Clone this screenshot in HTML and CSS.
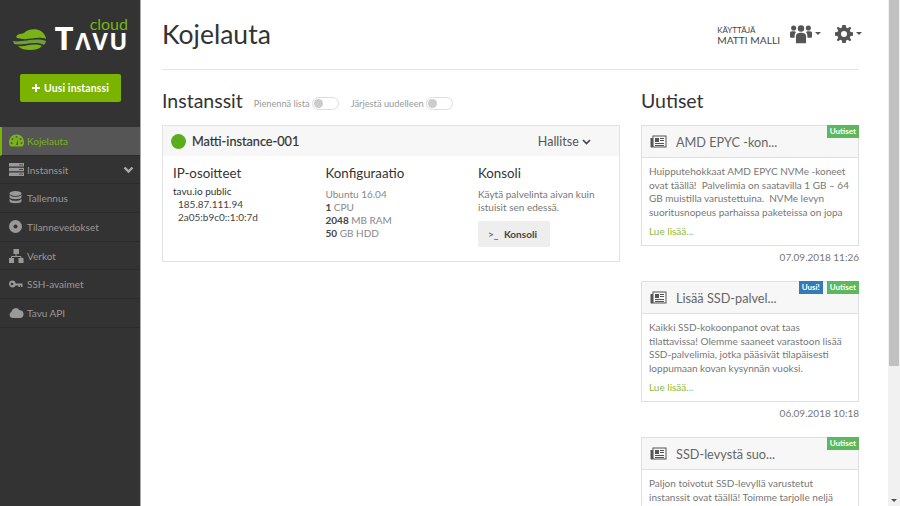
FILE: index.html
```html
<!DOCTYPE html>
<html lang="fi">
<head>
<meta charset="utf-8">
<title>Kojelauta</title>
<link rel="stylesheet" href="styles.css">
</head>
<body>
<aside class="sidebar">
  <div class="logo">
    <svg class="logo-mark" width="34" height="22" viewBox="0 0 34 22">
      <path d="M3 9C5 5 9 6 11 5C14 1 23 0 28 3C31 5 33 9 33 11C26 8 16 12 9 11C6 10.500 4 10 3 9Z" fill="#7ab317"/>
      <path d="M0 13C8 15 22 9 33 13C33 14 32 16 31 17C22 12 11 18 1 16Z" fill="#6f9f3a"/>
      <path d="M5 18C13 19 21 14 29 18C26 21 22 22 17 22C12 22 8 21 5 18Z" fill="#7ab317"/>
    </svg>
    <div class="logo-text">
      <span class="logo-cloud">cloud</span>
      <span class="logo-name"><span class="logo-t">T</span>ΛVU</span>
    </div>
  </div>
  <a class="new-btn"><svg class="plus" width="8" height="8" viewBox="0 0 8 8"><path d="M3 0H5V3H8V5H5V8H3V5H0V3H3Z" fill="#fff"/></svg>Uusi instanssi</a>
  <nav class="menu">
    <a class="menu-item active">
      <svg class="mi" width="15" height="13" viewBox="0 0 15 13"><path d="M7.500 0.500A7.500 7.500 0 0 0 1.500 12.500H13.500A7.500 7.500 0 0 0 7.500 0.500Z" fill="currentColor"/><circle cx="7.500" cy="3" r="1" fill="#555"/><circle cx="3.500" cy="5" r="1" fill="#555"/><circle cx="11.500" cy="5" r="1" fill="#555"/><circle cx="2.500" cy="9" r="1" fill="#555"/><circle cx="12.500" cy="9" r="1" fill="#555"/><path d="M7 11L9 5L9 11Z" fill="#555"/></svg>
      Kojelauta
    </a>
    <a class="menu-item">
      <svg class="mi" width="15" height="13" viewBox="0 0 15 13"><path d="M0 0H15V3.500H0ZM0 4.700H15V8.200H0ZM0 9.400H15V13H0Z" fill="currentColor"/><path d="M10 1.500H14V2.200H10ZM10 6H14V6.800H10ZM10 10.800H14V11.600H10Z" fill="#333"/></svg>
      Instanssit
      <svg class="menu-chev" width="11" height="8" viewBox="0 0 11 8"><path d="M1.500 1.500L5.500 5.500L9.500 1.500" fill="none" stroke="#aaa" stroke-width="2.400"/></svg>
    </a>
    <a class="menu-item">
      <svg class="mi" width="15" height="14" viewBox="0 0 15 14"><ellipse cx="6.500" cy="2.500" rx="6" ry="2.500" fill="currentColor"/><path d="M0.500 4V6C0.500 7.300 3 8.300 6.500 8.300S12.500 7.300 12.500 6V4C11 5.400 9 5.800 6.500 5.800S2 5.400 0.500 4ZM0.500 8V10C0.500 11.300 3 12.300 6.500 12.300S12.500 11.300 12.500 10V8C11 9.400 9 9.800 6.500 9.800S2 9.400 0.500 8Z" fill="currentColor"/></svg>
      Tallennus
    </a>
    <a class="menu-item">
      <svg class="mi" width="15" height="13" viewBox="0 0 15 13"><circle cx="6.500" cy="6.500" r="6.500" fill="currentColor"/><circle cx="6.500" cy="6.500" r="2" fill="#333"/></svg>
      Tilannevedokset
    </a>
    <a class="menu-item">
      <svg class="mi" width="15" height="14" viewBox="0 0 15 14"><path d="M4.500 0H10V5H4.500ZM0 9H5V14H0ZM9.500 9H14.500V14H9.500Z" fill="currentColor"/><path d="M7 5V7.500M2.500 9V7.500H12V9" fill="none" stroke="currentColor"/></svg>
      Verkot
    </a>
    <a class="menu-item">
      <svg class="mi" width="15" height="9" viewBox="0 0 15 9"><path d="M3.500 0.500A3.500 3.500 0 1 0 6.700 5.500H9.500V7H11V5.500H12V7H13.500V3.500H6.700A3.500 3.500 0 0 0 3.500 0.500ZM3 2.700A1.300 1.300 0 1 1 3 5.300A1.300 1.300 0 0 1 3 2.700Z" fill="currentColor"/></svg>
      SSH-avaimet
    </a>
    <a class="menu-item">
      <svg class="mi" width="15" height="11" viewBox="0 0 15 11"><path d="M3.500 11A3.300 3.300 0 0 1 2.500 4.700A4.300 4.300 0 0 1 10.500 3.300A3.900 3.900 0 0 1 11.500 11Z" fill="currentColor"/></svg>
      Tavu API
    </a>
  </nav>
</aside>

<main class="main">
  <header class="top">
    <h1 class="page-title">Kojelauta</h1>
    <div class="user">
      <div class="user-text">
        <span class="user-role">KÄYTTÄJÄ</span>
        <span class="user-name">MATTI MALLI</span>
      </div>
      <span class="drop">
        <svg width="22" height="20" viewBox="0 0 24 20"><circle cx="12" cy="4" r="3.500" fill="#555"/><circle cx="4" cy="3.500" r="2.800" fill="#555"/><circle cx="20" cy="3.500" r="2.800" fill="#555"/><path d="M6.500 12.500C6.500 9.500 9 8.500 12 8.500S17.500 9.500 17.500 12.500V20H6.500Z" fill="#555"/><path d="M0 8.500C0 7 2 7 4 7C5 7 6 7.500 6.500 8C5.500 9 5 10.500 5 12.500V14H1C0 14 0 13 0 12ZM24 8.500C24 7 22 7 20 7C19 7 18 7.500 17.500 8C18.500 9 19 10.500 19 12.500V14H23C24 14 24 13 24 12Z" fill="#555"/></svg>
        <i class="caret"></i>
      </span>
      <span class="drop">
        <svg width="18" height="18" viewBox="0 0 18 18"><path d="M7.300 0H10.700L11.100 2.500L12.800 3.200L14.900 1.700L16.300 3.100L14.800 5.200L15.500 6.900L18 7.300V10.700L15.500 11.100L14.800 12.800L16.300 14.900L14.900 16.300L12.800 14.800L11.100 15.500L10.700 18H7.300L6.900 15.500L5.200 14.800L3.100 16.300L1.700 14.900L3.200 12.800L2.500 11.100L0 10.700V7.300L2.500 6.900L3.200 5.200L1.700 3.100L3.100 1.700L5.200 3.200L6.900 2.500ZM9 6A3 3 0 1 0 9 12A3 3 0 1 0 9 6Z" fill="#555" fill-rule="evenodd"/></svg>
        <i class="caret"></i>
      </span>
    </div>
  </header>
  <div class="columns">
    <section class="left">
      <div class="section-head">
        <h2 class="section-title">Instanssit</h2>
        <span class="toggle-label">Pienennä lista</span><i class="toggle"></i>
        <span class="toggle-label second">Järjestä uudelleen</span><i class="toggle"></i>
      </div>
      <article class="instance">
        <div class="instance-head">
          <i class="status"></i>
          <span class="instance-name">Matti-instance-001</span>
          <span class="manage">Hallitse
            <svg width="9" height="6" viewBox="0 0 9 6"><path d="M1 1L4.500 4.500L8 1" fill="none" stroke="#444" stroke-width="1.600"/></svg>
          </span>
        </div>
        <div class="instance-body">
          <div class="col">
            <h3 class="col-title">IP-osoitteet</h3>
            <div class="ip-net">tavu.io public</div>
            <div class="ip">185.87.111.94</div>
            <div class="ip">2a05:b9c0::1:0:7d</div>
          </div>
          <div class="col">
            <h3 class="col-title">Konfiguraatio</h3>
            <div class="spec-list">
              <div class="spec">Ubuntu 16.04</div>
              <div class="spec"><b>1</b> CPU</div>
              <div class="spec"><b>2048</b> MB RAM</div>
              <div class="spec"><b>50</b> GB HDD</div>
            </div>
          </div>
          <div class="col">
            <h3 class="col-title">Konsoli</h3>
            <p class="console-text">Käytä palvelinta aivan kuin istuisit sen edessä.</p>
            <a class="console-btn"><span class="prompt">&gt;_</span> Konsoli</a>
          </div>
        </div>
      </article>
    </section>
    <section class="news">
      <h2 class="news-title">Uutiset</h2>
      <article class="news-card">
        <div class="news-head">
          <svg class="news-icon" width="17" height="13" viewBox="0 0 17 13"><path d="M2.500 0.500H16.500V12.500H1.500C0.800 12.500 0.500 12 0.500 11.500V3H2.500ZM3.500 1.500V11.500H15.500V1.500ZM5 3H9V7H5ZM10 3H14V4H10ZM10 5H14V6H10ZM5 8H14V9H5ZM5 10H14V11H5Z" fill="#555" fill-rule="evenodd"/></svg>
          <span class="news-name">AMD EPYC -kon...</span>
          <div class="badges"><span class="badge green">Uutiset</span></div>
        </div>
        <div class="news-body">
          <p class="news-text">Huipputehokkaat AMD EPYC NVMe -koneet ovat täällä!&nbsp; Palvelimia on saatavilla 1 GB – 64 GB muistilla varustettuina.&nbsp; NVMe levyn suoritusnopeus parhaissa paketeissa on jopa</p>
          <a class="more">Lue lisää...</a>
        </div>
      </article>
      <div class="news-date">07.09.2018 11:26</div>
      <article class="news-card">
        <div class="news-head">
          <svg class="news-icon" width="17" height="13" viewBox="0 0 17 13"><path d="M2.500 0.500H16.500V12.500H1.500C0.800 12.500 0.500 12 0.500 11.500V3H2.500ZM3.500 1.500V11.500H15.500V1.500ZM5 3H9V7H5ZM10 3H14V4H10ZM10 5H14V6H10ZM5 8H14V9H5ZM5 10H14V11H5Z" fill="#555" fill-rule="evenodd"/></svg>
          <span class="news-name">Lisää SSD-palvel...</span>
          <div class="badges"><span class="badge blue">Uusi!</span><span class="badge green">Uutiset</span></div>
        </div>
        <div class="news-body">
          <p class="news-text">Kaikki SSD-kokoonpanot ovat taas tilattavissa! Olemme saaneet varastoon lisää SSD-palvelimia, jotka pääsivät tilapäisesti loppumaan kovan kysynnän vuoksi.</p>
          <a class="more">Lue lisää...</a>
        </div>
      </article>
      <div class="news-date">06.09.2018 10:18</div>
      <article class="news-card">
        <div class="news-head">
          <svg class="news-icon" width="17" height="13" viewBox="0 0 17 13"><path d="M2.500 0.500H16.500V12.500H1.500C0.800 12.500 0.500 12 0.500 11.500V3H2.500ZM3.500 1.500V11.500H15.500V1.500ZM5 3H9V7H5ZM10 3H14V4H10ZM10 5H14V6H10ZM5 8H14V9H5ZM5 10H14V11H5Z" fill="#555" fill-rule="evenodd"/></svg>
          <span class="news-name">SSD-levystä suo...</span>
          <div class="badges"><span class="badge green">Uutiset</span></div>
        </div>
        <div class="news-body">
          <p class="news-text">Paljon toivotut SSD-levyllä varustetut instanssit ovat täällä! Toimme tarjolle neljä</p>
        </div>
      </article>
    </section>
  </div>
</main>

<div class="scrollbar">
  <div class="thumb"></div>
  <i class="scroll-down"></i>
</div>
</body>
</html>
```

FILE: styles.css
```css
* { box-sizing: border-box; }
html, body { height: 100%; }
body {
  margin: 0;
  display: flex;
  height: 506px;
  overflow: hidden;
  background: #fff;
  font-family: Lato, "Open Sans", sans-serif;
  color: #333;
}
h1, h2, h3, p { margin: 0; font-weight: 400; }
a { display: block; }

.sidebar {
  flex: 0 0 141px;
  background: #333;
  border-right: 1px solid #aaa;
  overflow: hidden;
}
.logo {
  display: flex;
  align-items: flex-start;
  gap: 5px;
  padding: 18px 0 0 13px;
  height: 74px;
}
.logo-mark { margin-top: 10px; flex: none; }
.logo-text { display: flex; flex-direction: column; align-items: flex-end; width: 76px; }
.logo-cloud { color: #7ab317; font-size: 16px; line-height: 12px; }
.logo-name {
  margin-top: -6px;
  margin-right: -1px;
  color: #fff;
  font-size: 24px;
  line-height: 28px;
  font-weight: 700;
  letter-spacing: 1.500px;
  white-space: nowrap;
  font-family: "Open Sans", sans-serif;
}
.logo-t { font-size: 33px; }
.new-btn {
  display: flex;
  align-items: center;
  justify-content: center;
  width: 101px;
  height: 28px;
  margin-left: 20px;
  background: #7ab300;
  border-radius: 2px;
  color: #fff;
  font-size: 10.500px;
  font-weight: 700;
  letter-spacing: 0.100px;
}
.plus { margin-right: 4px; }
.menu { margin-top: 25px; }
.menu-item {
  display: flex;
  align-items: center;
  height: 28.700px;
  padding-left: 9px;
  border-bottom: 1px solid #2b2b2b;
  color: #999;
  font-size: 10px;
}
.menu-item.active {
  background: #555;
  color: #7ab317;
  border-left: 2px solid #7ab300;
  padding-left: 7px;
}
.mi { flex: none; margin-right: 3px; }
.menu-chev { margin-left: auto; margin-right: 6px; }

.main { flex: 1; min-width: 0; padding: 0 29px 0 21px; overflow: hidden; }
.top {
  display: flex;
  align-items: center;
  justify-content: space-between;
  height: 70px;
  border-bottom: 1px solid #e6e6e6;
}
.page-title { font-size: 26.500px; line-height: 30px; color: #333; margin-top: -2px; }
.user { display: flex; align-items: center; margin: -2px -3px 0 0; }
.user-text { display: flex; flex-direction: column; margin: 3px 10px 0 0; color: #444; }
.user-role { font-size: 8px; line-height: 10px; }
.user-name { font-size: 10.200px; line-height: 11px; }
.drop { display: flex; align-items: center; }
.drop + .drop { margin-left: 14px; }
.caret {
  width: 0;
  height: 0;
  margin-left: 3px;
  border: 3px solid transparent;
  border-top-color: #555;
  border-bottom: 0;
}
.columns { display: flex; justify-content: space-between; }
.left { width: 458px; }
.section-head { display: flex; align-items: center; height: 55px; padding-top: 6px; }
.section-title { font-size: 19.500px; line-height: 24px; margin-right: 11px; color: #333; }
.toggle-label { font-size: 9.200px; color: #999; margin-top: 6px; }
.toggle-label.second { margin-left: 12px; font-size: 9.300px; }
.toggle {
  position: relative;
  width: 27px;
  height: 13px;
  margin: 6px 0 0 2px;
  border: 1px solid #ddd;
  border-radius: 7px;
  background: #fff;
}
.toggle::before {
  content: "";
  position: absolute;
  left: 1px;
  top: 1px;
  width: 9px;
  height: 9px;
  border-radius: 50%;
  background: #ccc;
}
.instance { border: 1px solid #e3e3e3; height: 137px; }
.instance-head {
  display: flex;
  align-items: center;
  height: 30px;
  padding: 0 28px 0 8px;
  background: #f7f7f7;
}
.status { width: 15px; height: 15px; border-radius: 50%; background: #5cad1e; margin-right: 6px; }
.instance-name { font-size: 12.700px; color: #333; -webkit-text-stroke: 0.200px #333; }
.manage { margin-left: auto; font-size: 12.500px; color: #555; }
.manage svg { vertical-align: 1px; }
.instance-body { display: flex; padding: 9px 0 0 10px; }
.col { flex: 0 0 152.500px; }
.col-title { font-size: 13.300px; line-height: 17px; color: #333; margin-bottom: 3px; }
.ip-net { font-size: 10px; line-height: 13px; }
.ip { font-size: 10px; line-height: 13px; padding-left: 5px; color: #444; }
.spec-list { padding-top: 3px; }
.spec { font-size: 10px; line-height: 13px; color: #888; }
.spec b { color: #444; font-weight: 700; }
.console-text { font-size: 10px; line-height: 13px; color: #777; padding-top: 3px; width: 125px; }
.console-btn {
  width: 72px;
  height: 26px;
  margin-top: 7px;
  padding-right: 3px;
  background: #eee;
  border-radius: 2px;
  font-size: 10px;
  font-weight: 700;
  line-height: 26px;
  color: #444;
  text-align: center;
}
.prompt { font-weight: 400; margin-right: 3px; }

.news { width: 218px; }
.news-title { font-size: 19.500px; line-height: 24px; height: 55px; padding-top: 19px; color: #333; }
.news-card { border: 1px solid #e0e0e0; height: 121px; }
.news-head {
  position: relative;
  display: flex;
  align-items: center;
  height: 32px;
  padding-left: 8px;
  background: #f7f7f7;
  border-bottom: 1px solid #e0e0e0;
}
.news-icon { margin-right: 9px; flex: none; }
.news-name { font-size: 12.700px; color: #666; }
.badges { position: absolute; top: -1px; right: -1px; display: flex; gap: 4px; }
.badge {
  height: 13px;
  padding: 0 3px;
  color: #fff;
  font-size: 8px;
  font-weight: 700;
  line-height: 13px;
}
.badge.green { background: #5cb85c; }
.badge.blue { background: #337ab7; }
.news-body { padding: 7px 7px 0; height: 87px; }
.news-text { font-size: 10px; line-height: 13.500px; color: #777; }
.more { font-size: 10px; line-height: 13px; color: #8dbb3d; margin-top: 6px; }
.news-date { height: 35px; padding-top: 5px; font-size: 10px; text-align: right; color: #777; }

.scrollbar {
  position: relative;
  flex: 0 0 12px;
  background: #f1f1f1;
  padding: 0 1px;
}
.thumb { height: 366px; background: #c1c1c1; }
.scroll-down {
  position: absolute;
  left: 3px;
  bottom: 4px;
  width: 0;
  height: 0;
  border: 3px solid transparent;
  border-top-color: #505050;
  border-bottom: 0;
}
```
